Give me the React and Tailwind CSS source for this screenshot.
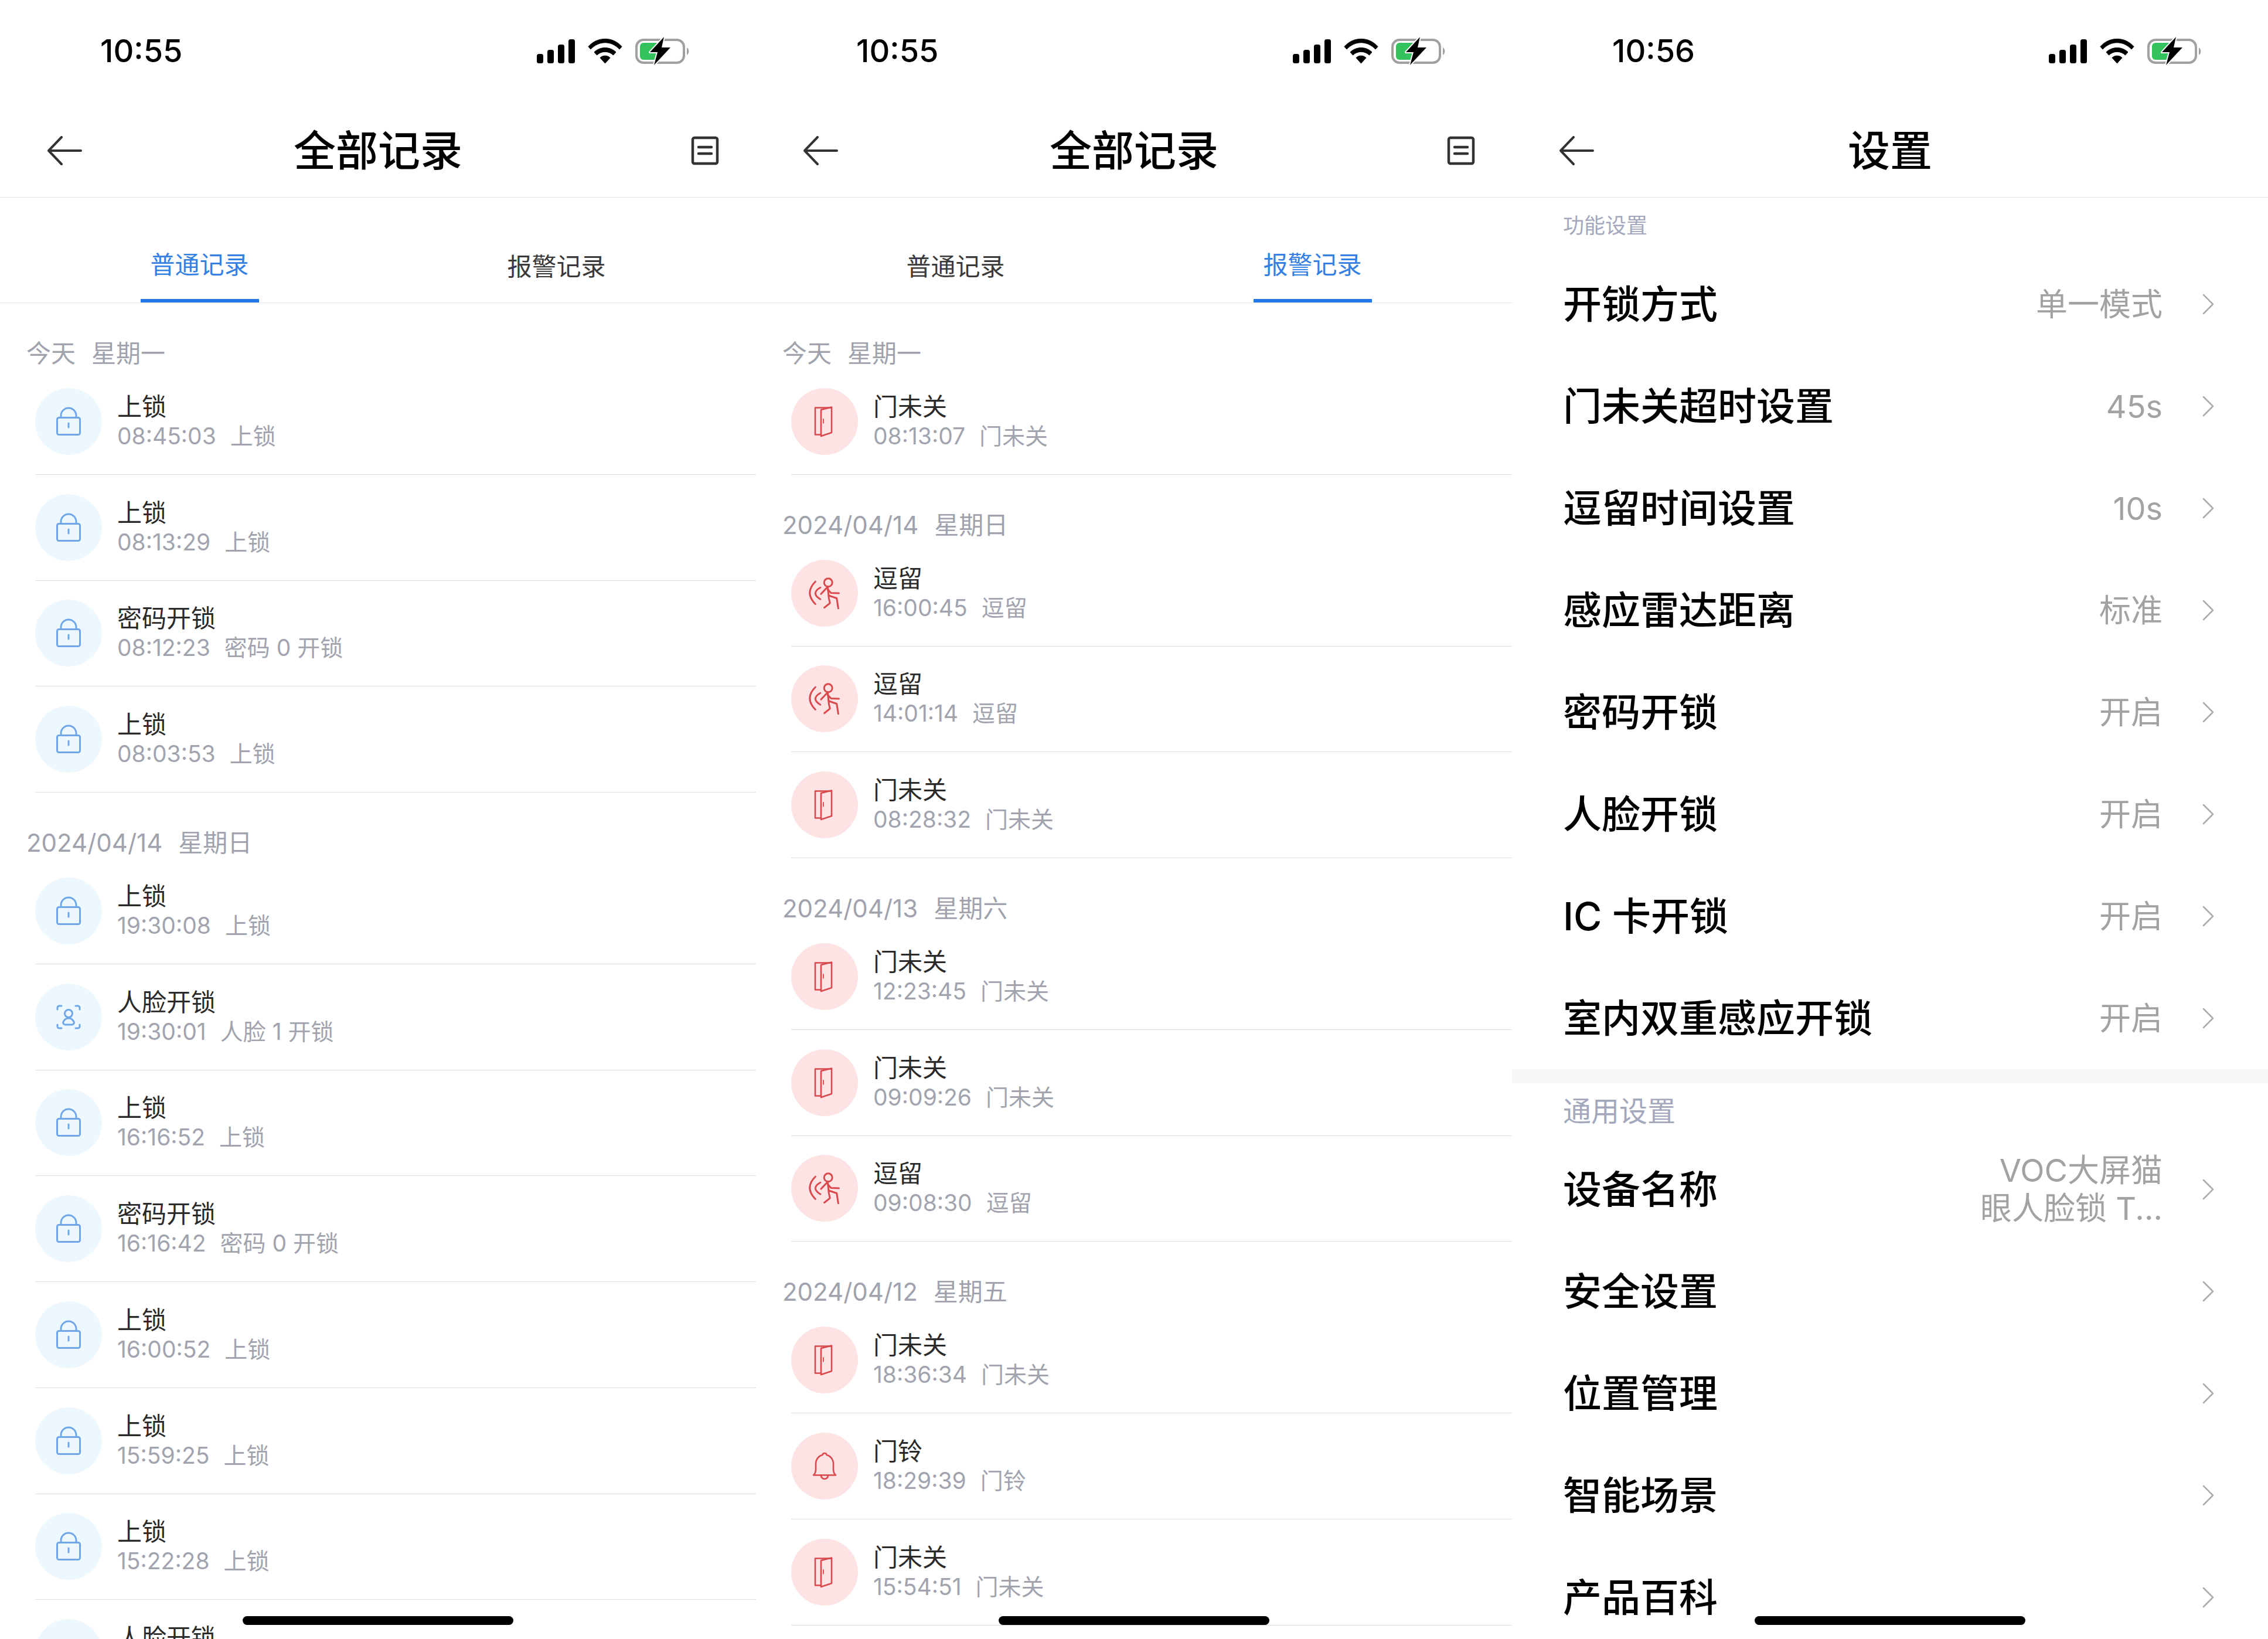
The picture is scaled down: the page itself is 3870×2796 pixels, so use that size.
const lockIcon = (
  <svg viewBox="0 0 60 60" className="w-[60px] h-[60px]" fill="none" stroke="#6ea6e8" strokeWidth="3" strokeLinecap="round" strokeLinejoin="round">
    <rect x="10.5" y="23.5" width="39" height="29" rx="3" />
    <path d="M17 23V20a13 13 0 0 1 26 0v3" />
    <path d="M30 33v7" />
  </svg>
);
const faceIcon = (
  <svg viewBox="0 0 60 60" className="w-[60px] h-[60px]" fill="none" stroke="#6ea6e8" strokeWidth="3" strokeLinecap="round" strokeLinejoin="round">
    <path d="M11 17v-3a3 3 0 0 1 3-3h4M42 11h4a3 3 0 0 1 3 3v3M49 43v3a3 3 0 0 1-3 3h-4M18 49h-4a3 3 0 0 1-3-3v-3" />
    <circle cx="30" cy="24" r="6.5" />
    <path d="M24 43h12a3.5 3.5 0 0 0 3-5c-2-4-5-6-9-6s-7 2-9 6a3.5 3.5 0 0 0 3 5z" />
  </svg>
);
const doorIcon = (
  <svg viewBox="0 0 60 60" className="w-[60px] h-[60px]" fill="none" stroke="#d9484c" strokeWidth="2.6" strokeLinejoin="round" strokeLinecap="round">
    <path d="M24 52.5H14V6.5H42" />
    <path d="M24 10L42 5.5V49L24 55Z" />
    <path d="M28 26v6.5" strokeWidth="1.8" />
  </svg>
);
const walkIcon = (
  <svg viewBox="0 0 60 60" className="w-[60px] h-[60px]" fill="none" stroke="#d9484c" strokeWidth="3" strokeLinejoin="round" strokeLinecap="round">
    <circle cx="36.2" cy="11.8" r="7" />
    <path d="M35.4 19L37.3 38.5L39.2 46.8L29.7 54.5" />
    <path d="M23.9 31.2L35.4 19" />
    <path d="M35.4 23.5L41 29.5L54.5 30" />
    <path d="M37.3 34L50.7 38.5L53.4 55.8" />
    <path d="M14.3 10.2Q-4.7 29 14.3 48.5" />
    <path d="M22.8 20.2Q5.8 30 22.8 40.2" />
  </svg>
);
const bellIcon = (
  <svg viewBox="0 0 60 60" className="w-[60px] h-[60px]" fill="none" stroke="#d9484c" strokeWidth="2.6" strokeLinejoin="round" strokeLinecap="round">
    <path d="M11 45.5H49C46 43 45 40 45 35V26C45 18 39 12 33.5 11C33 7 27 7 26.5 11C21 12 15 18 15 26V35C15 40 14 43 11 45.5Z" />
    <path d="M24 46a6 6 0 0 0 12 0" />
  </svg>
);

const icons = { lock: lockIcon, face: faceIcon, door: doorIcon, walk: walkIcon, bell: bellIcon };

function StatusBar({ time }) {
  return (
    <div className="h-[174px] flex items-center justify-between pl-[171px] pr-[110px]">
      <span className="text-[54px] font-medium leading-none text-black">{time}</span>
      <svg viewBox="916 60 264 52" className="w-[264px] h-[52px] mt-[0px]">
        <rect x="916" y="91" width="11" height="16" rx="3.5" fill="#000" />
        <rect x="934" y="84" width="11" height="23" rx="3.5" fill="#000" />
        <rect x="952" y="75" width="11" height="32" rx="3.5" fill="#000" />
        <rect x="970" y="66" width="11" height="41" rx="3.5" fill="#000" />
        <path d="M1004 78.5C1019 61 1046 61 1061 78.5L1057 83C1043 68 1022 68 1008 83Z" fill="#000" stroke="#000" strokeWidth="1" strokeLinejoin="round" />
        <path d="M1014 88C1024 78 1041 78 1051 88L1046.5 93C1039 85.5 1026 85.5 1018.5 93Z" fill="#000" stroke="#000" strokeWidth="1" strokeLinejoin="round" />
        <path d="M1024 97.5C1029 93 1036 93 1041 97.5L1032.5 107Z" fill="#000" stroke="#000" strokeWidth="1" strokeLinejoin="round" />
        <rect x="1086" y="67" width="81" height="39" rx="12" fill="none" stroke="#a0a0a0" strokeWidth="4" />
        <path d="M1172 80a8 8 0 0 1 0 13Z" fill="#a0a0a0" />
        <path d="M1098 72H1126L1118 101H1098a6 6 0 0 1-6-6V78a6 6 0 0 1 6-6Z" fill="#34c25c" />
        <path d="M1133 62L1109 88H1122L1116 110L1144 80H1129Z" fill="#000" stroke="#fff" strokeWidth="4" strokeLinejoin="round" paintOrder="stroke" />
      </svg>
    </div>
  );
}

function Nav({ title, doc }) {
  return (
    <div className="h-[163px] pt-[4px] border-b border-[#e4e4e4] grid grid-cols-[1fr_auto_1fr] items-center">
      <div className="pl-[80px]">
        <svg viewBox="0 0 60 50" className="w-[60px] h-[50px]" fill="none" stroke="#333" strokeWidth="4" strokeLinecap="round" strokeLinejoin="round">
          <path d="M58 25H3M25 2L3 25L25 48" />
        </svg>
      </div>
      <div className="text-[72px] leading-[90px] font-medium text-black">{title}</div>
      <div className="flex justify-end pr-[63px]">
        {doc && (
          <svg viewBox="0 0 48 50" className="w-[48px] h-[50px]" fill="none" stroke="#333" strokeWidth="4.5" strokeLinecap="round" strokeLinejoin="round">
            <rect x="3" y="3" width="42" height="44" rx="3" />
            <path d="M13 19H35M13 30H35" />
          </svg>
        )}
      </div>
    </div>
  );
}

function Tabs({ active }) {
  const tabs = ["普通记录", "报警记录"];
  return (
    <div className="h-[180px] border-b border-[#e4e4e4] grid grid-cols-2 px-[36px]">
      {tabs.map((t, i) =>
        i === active ? (
          <div key={t} className="flex flex-col items-center justify-end">
            <span className="text-[42px] leading-[60px] mb-[28px] text-[#3480e3]">{t}</span>
            <div className="w-[202px] h-[6px] bg-[#2277ea]" />
          </div>
        ) : (
          <div key={t} className="flex flex-col items-center justify-end pb-[31px]">
            <span className="text-[42px] leading-[60px] text-[#3a3a3a]">{t}</span>
          </div>
        )
      )}
    </div>
  );
}

function Group({ date, week, rows, red }) {
  return (
    <div>
      <div className="h-[112px] pt-[60px] pl-[45px] flex gap-[27px] text-[42px] leading-[52px] text-[#a0a3ad]">
        <span>{date}</span>
        <span>{week}</span>
      </div>
      {rows.map((r, i) => (
        <div key={i} className="ml-[60px] h-[180.75px] border-b border-[#dedee2] flex items-center gap-[26px]">
          <div className={`w-[114px] h-[114px] rounded-full flex items-center justify-center shrink-0 ${red ? "bg-[#fde3e4]" : "bg-[#edf8fe]"}`}>
            {icons[r[0]]}
          </div>
          <div>
            <div className="text-[42px] leading-[50px] text-[#2a2a2a]">{r[1]}</div>
            <div className="text-[39px] leading-[50px] text-[#a1a4ae] flex gap-[24px]">
              <span>{r[2]}</span>
              <span>{r[3]}</span>
            </div>
          </div>
        </div>
      ))}
    </div>
  );
}

function HomeBar() {
  return <div className="absolute left-[414px] top-[2757px] w-[462px] h-[15px] rounded-full bg-black" />;
}

function Phone({ children }) {
  return <div className="relative w-[1290px] h-[2796px] overflow-hidden bg-white shrink-0">{children}<HomeBar /></div>;
}

const Chevron = () => (
  <svg viewBox="0 0 20 36" className="w-[20px] h-[36px] shrink-0" fill="none" stroke="#ababab" strokeWidth="2.5" strokeLinecap="round" strokeLinejoin="round">
    <path d="M2 2L18 18L2 34" />
  </svg>
);

function SettingRow({ label, value, lines }) {
  return (
    <div className="h-[174px] pl-[87px] pr-[92px] flex items-center">
      <span className="text-[66px] leading-[80px] font-medium text-black">{label}</span>
      <div className="ml-auto mr-[68px] text-right text-[54px] text-[#a2a2a2] leading-[65px]">
        {lines ? lines.map((l) => <div key={l}>{l}</div>) : value}
      </div>
      <Chevron />
    </div>
  );
}

const A = ["lock", "上锁"];
const group1a = [
  [...A, "08:45:03", "上锁"],
  [...A, "08:13:29", "上锁"],
  ["lock", "密码开锁", "08:12:23", "密码 0 开锁"],
  [...A, "08:03:53", "上锁"],
];
const group1b = [
  [...A, "19:30:08", "上锁"],
  ["face", "人脸开锁", "19:30:01", "人脸 1 开锁"],
  [...A, "16:16:52", "上锁"],
  ["lock", "密码开锁", "16:16:42", "密码 0 开锁"],
  [...A, "16:00:52", "上锁"],
  [...A, "15:59:25", "上锁"],
  [...A, "15:22:28", "上锁"],
  ["face", "人脸开锁", "15:10:01", "人脸 1 开锁"],
];
const D = ["door", "门未关"];
const W = ["walk", "逗留"];

export default function App() {
  return (
    <div className="flex w-[3870px] h-[2796px] overflow-hidden bg-white [font-family:Inter,'Noto_Sans_CJK_SC',sans-serif]">
      <Phone>
        <StatusBar time="10:55" />
        <Nav title="全部记录" doc />
        <Tabs active={0} />
        <Group date="今天" week="星期一" rows={group1a} />
        <Group date="2024/04/14" week="星期日" rows={group1b} />
      </Phone>
      <Phone>
        <StatusBar time="10:55" />
        <Nav title="全部记录" doc />
        <Tabs active={1} />
        <Group red date="今天" week="星期一" rows={[[...D, "08:13:07", "门未关"]]} />
        <Group red date="2024/04/14" week="星期日" rows={[[...W, "16:00:45", "逗留"], [...W, "14:01:14", "逗留"], [...D, "08:28:32", "门未关"]]} />
        <Group red date="2024/04/13" week="星期六" rows={[[...D, "12:23:45", "门未关"], [...D, "09:09:26", "门未关"], [...W, "09:08:30", "逗留"]]} />
        <Group red date="2024/04/12" week="星期五" rows={[[...D, "18:36:34", "门未关"], ["bell", "门铃", "18:29:39", "门铃"], [...D, "15:54:51", "门未关"]]} />
      </Phone>
      <Phone>
        <StatusBar time="10:56" />
        <Nav title="设置" />
        <div className="h-[95px] pl-[87px] pt-[24px] text-[36px] leading-[48px] text-[#a4a8bc]">功能设置</div>
        <SettingRow label="开锁方式" value="单一模式" />
        <SettingRow label="门未关超时设置" value="45s" />
        <SettingRow label="逗留时间设置" value="10s" />
        <SettingRow label="感应雷达距离" value="标准" />
        <SettingRow label="密码开锁" value="开启" />
        <SettingRow label="人脸开锁" value="开启" />
        <SettingRow label="IC 卡开锁" value="开启" />
        <SettingRow label="室内双重感应开锁" value="开启" />
        <div className="h-[24px] bg-[#f7f7f7]" />
        <div className="h-[94px] pl-[87px] pt-[18px] text-[48px] leading-[60px] text-[#a4a8bc]">通用设置</div>
        <SettingRow label="设备名称" lines={["VOC大屏猫", "眼人脸锁 T..."]} />
        <SettingRow label="安全设置" />
        <SettingRow label="位置管理" />
        <SettingRow label="智能场景" />
        <SettingRow label="产品百科" />
      </Phone>
    </div>
  );
}
